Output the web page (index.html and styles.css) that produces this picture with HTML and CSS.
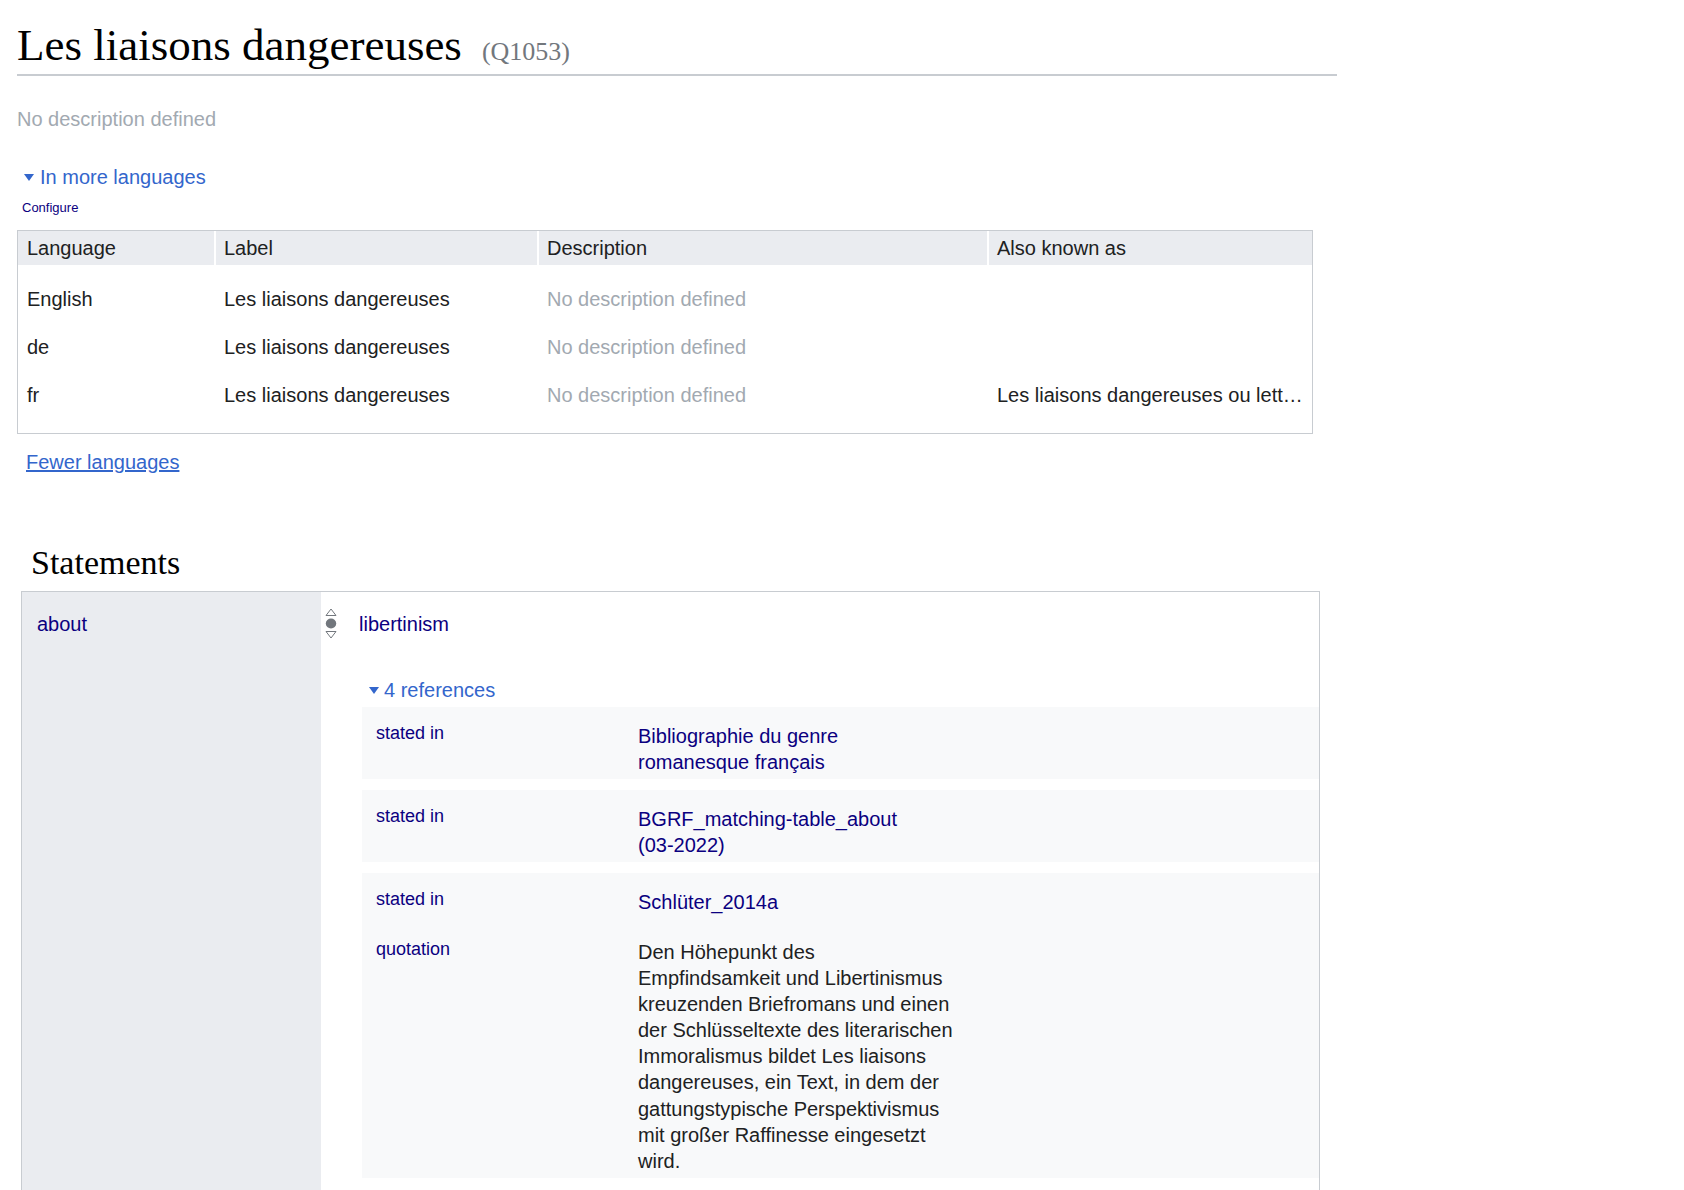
FILE: index.html
```html
<!DOCTYPE html>
<html lang="en">
<head>
<meta charset="utf-8">
<title>Les liaisons dangereuses (Q1053)</title>
<link rel="stylesheet" href="styles.css">
</head>
<body>
<div class="page">
  <div class="title-bar">
    <h1 class="title">Les liaisons dangereuses</h1>
    <span class="qid">(Q1053)</span>
  </div>

  <p class="desc">No description defined</p>

  <div class="toggler">
    <svg class="tri" width="10" height="7" viewBox="0 0 10 7"><path d="M0 0H10L5 7Z"/></svg>
    <span>In more languages</span>
  </div>
  <a class="configure" href="#">Configure</a>

  <div class="terms">
    <div class="terms-head">
      <div class="cell">Language</div>
      <div class="cell">Label</div>
      <div class="cell">Description</div>
      <div class="cell">Also known as</div>
    </div>
    <div class="terms-body">
      <div class="terms-row">
        <div class="cell">English</div>
        <div class="cell">Les liaisons dangereuses</div>
        <div class="cell muted">No description defined</div>
        <div class="cell"></div>
      </div>
      <div class="terms-row">
        <div class="cell">de</div>
        <div class="cell">Les liaisons dangereuses</div>
        <div class="cell muted">No description defined</div>
        <div class="cell"></div>
      </div>
      <div class="terms-row">
        <div class="cell">fr</div>
        <div class="cell">Les liaisons dangereuses</div>
        <div class="cell muted">No description defined</div>
        <div class="cell">Les liaisons dangereuses ou lett…</div>
      </div>
    </div>
  </div>

  <div class="fewer-wrap"><a class="fewer" href="#">Fewer languages</a></div>

  <h2 class="section">Statements</h2>

  <div class="group">
    <div class="group-prop"><a class="link" href="#">about</a></div>
    <div class="group-stmts">
      <div class="stmt-main">
        <svg class="rank" width="12" height="31" viewBox="0 0 12 31">
          <path class="rank-tri" d="M6 1L11 7.5H1Z"/>
          <ellipse class="rank-dot" cx="6" cy="15.5" rx="5.2" ry="4.9"/>
          <path class="rank-tri" d="M1 23.5H11L6 30Z"/>
        </svg>
        <a class="link" href="#">libertinism</a>
      </div>

      <div class="refs-toggle">
        <svg class="tri" width="10" height="7" viewBox="0 0 10 7"><path d="M0 0H10L5 7Z"/></svg>
        <span>4 references</span>
      </div>

      <div class="ref">
        <div class="snak">
          <div class="snak-prop"><a class="link" href="#">stated in</a></div>
          <div class="snak-val"><a class="link" href="#">Bibliographie du genre romanesque français</a></div>
        </div>
      </div>

      <div class="ref">
        <div class="snak">
          <div class="snak-prop"><a class="link" href="#">stated in</a></div>
          <div class="snak-val"><a class="link" href="#">BGRF_matching-table_about <span class="nowrap">(03-2022)</span></a></div>
        </div>
      </div>

      <div class="ref">
        <div class="snak">
          <div class="snak-prop"><a class="link" href="#">stated in</a></div>
          <div class="snak-val"><a class="link" href="#">Schlüter_2014a</a></div>
        </div>
        <div class="snak snak-quote">
          <div class="snak-prop"><a class="link" href="#">quotation</a></div>
          <div class="snak-val quote">Den Höhepunkt des Empfindsamkeit und Libertinismus kreuzenden Briefromans und einen der Schlüsseltexte des literarischen Immoralismus bildet Les liaisons dangereuses, ein Text, in dem der gattungstypische Perspektivismus mit großer Raffinesse eingesetzt wird.</div>
        </div>
      </div>
    </div>
  </div>
</div>
</body>
</html>
```

FILE: styles.css
```css
html, body {
  margin: 0;
  padding: 0;
  background: #ffffff;
}

body {
  font-family: "Liberation Sans", Arial, sans-serif;
  font-size: 20px;
  line-height: 26px;
  color: #202122;
}

.page {
  width: 1320px;
  padding: 19px 0 0 17px;
}

/* Title */
.title-bar {
  display: flex;
  align-items: baseline;
  padding-bottom: 3px;
  border-bottom: 2px solid #c8ccd1;
}

.title {
  margin: 0;
  font-family: "Liberation Serif", "Times New Roman", serif;
  font-weight: normal;
  font-size: 45px;
  line-height: 52px;
  color: #000000;
}

.qid {
  margin-left: 20px;
  font-family: "Liberation Serif", "Times New Roman", serif;
  font-size: 26px;
  line-height: 30px;
  color: #72777d;
}

.desc {
  margin: 30px 0 0;
  color: #a2a9b1;
}

/* Toggler */
.toggler {
  display: flex;
  align-items: center;
  gap: 6px;
  margin: 32px 0 0 7px;
  color: #3366cc;
}

.tri {
  fill: #3366cc;
  flex: none;
}

.configure {
  display: block;
  width: max-content;
  margin: 10px 0 0 5px;
  font-size: 13px;
  line-height: 16px;
  color: #0b0080;
  text-decoration: none;
}

/* Terms table */
.terms {
  box-sizing: border-box;
  width: 1296px;
  margin-top: 14px;
  border: 1px solid #c8ccd1;
}

.terms-head,
.terms-row {
  display: grid;
  grid-template-columns: 196px 323px 450px 1fr;
}

.terms-head {
  background: #eaecf0;
  line-height: 34px;
}

.terms-body {
  padding: 10px 0 14px;
}

.terms-row {
  line-height: 48px;
}

.cell {
  padding: 0 6px 0 8px;
  white-space: nowrap;
}

.cell:first-child {
  padding-left: 9px;
}

.terms-head .cell + .cell {
  border-left: 2px solid #ffffff;
}

.terms-row .cell + .cell {
  border-left: 2px solid transparent;
}

.muted {
  color: #a2a9b1;
}

.fewer-wrap {
  margin: 15px 0 0 9px;
}

.fewer {
  color: #3366cc;
  text-decoration: underline;
}

/* Statements */
.section {
  margin: 68px 0 8px 14px;
  font-family: "Liberation Serif", "Times New Roman", serif;
  font-weight: normal;
  font-size: 34px;
  line-height: 40px;
  color: #000000;
}

.group {
  box-sizing: border-box;
  display: flex;
  width: 1299px;
  min-height: 620px;
  margin-left: 4px;
  border: 1px solid #c8ccd1;
  border-bottom: none;
}

.group-prop {
  box-sizing: border-box;
  flex: none;
  width: 299px;
  padding: 19px 0 0 15px;
  background: #eaecf0;
}

.group-stmts {
  flex: 1;
  min-width: 0;
}

.link {
  color: #0b0080;
  text-decoration: none;
}

.nowrap {
  white-space: nowrap;
}

.stmt-main {
  display: flex;
  align-items: center;
  gap: 22px;
  padding: 16px 0 0 4px;
}

.rank {
  flex: none;
}

.rank-tri {
  fill: none;
  stroke: #72777d;
  stroke-width: 1;
}

.rank-dot {
  fill: #72777d;
}

.refs-toggle {
  display: flex;
  align-items: center;
  gap: 5px;
  margin: 38px 0 0 48px;
  color: #3366cc;
}

.ref {
  margin: 4px 0 11px 41px;
  background: #f8f9fa;
}

.ref + .ref {
  margin-top: 0;
}

.snak {
  display: flex;
  padding: 16px 0 4px 14px;
}

.snak-quote {
  padding-top: 20px;
}

.snak-prop {
  flex: none;
  width: 262px;
  font-size: 18px;
  line-height: 20px;
}

.snak-val {
  width: 315.6px;
}

.quote {
  line-height: 26.1px;
}
```
